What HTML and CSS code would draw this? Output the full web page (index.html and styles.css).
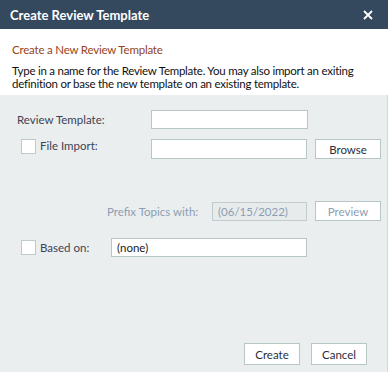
FILE: index.html
```html
<!DOCTYPE html>
<html>
<head>
<meta charset="utf-8">
<link rel="stylesheet" href="styles.css">
</head>
<body>
<div class="dialog">
  <div class="titlebar">
    <span class="title">Create Review Template</span>
    <svg class="close" width="10" height="10" viewBox="0 0 10 10"><path d="M1 1 L9 9 M9 1 L1 9" stroke="#ffffff" stroke-width="1.8" fill="none"/></svg>
  </div>
  <div class="header">
    <div class="heading">Create a New Review Template</div>
    <div class="desc">Type in a name for the Review Template. You may also import an exiting definition or base the new template on an existing template.</div>
  </div>
  <div class="body">
    <div class="row row1">
      <span class="label lbl-rt">Review Template:</span>
      <div class="input in-rt"></div>
    </div>
    <div class="row row2">
      <span class="check"></span>
      <span class="label lbl-fi">File Import:</span>
      <div class="input in-fi"></div>
      <div class="btn btn-side">Browse</div>
    </div>
    <div class="row row3">
      <span class="label lbl-pt">Prefix Topics with:</span>
      <div class="input disabled in-pt">(06/15/2022)</div>
      <div class="btn btn-side btn-dis">Preview</div>
    </div>
    <div class="row row4">
      <span class="check"></span>
      <span class="label lbl-bo">Based on:</span>
      <div class="input in-bo">(none)</div>
    </div>
    <div class="footer">
      <div class="btn btn-foot">Create</div>
      <div class="btn btn-foot">Cancel</div>
    </div>
  </div>
</div>
</body>
</html>
```
FILE: styles.css
```css
html, body {
  margin: 0;
  padding: 0;
}
body {
  font-family: Lato, "Noto Sans", sans-serif;
  font-size: 11.5px;
  color: #1c1c1c;
}
.dialog {
  width: 388px;
  height: 372px;
  display: flex;
  flex-direction: column;
  background: #eaeeee;
}
.titlebar {
  height: 29px;
  background: #34495e;
  color: #ffffff;
  display: flex;
  align-items: center;
  justify-content: space-between;
  padding: 0 15px 0 10px;
  flex: none;
}
.title {
  font-weight: bold;
  font-size: 13px;
}
.close {
  display: block;
  margin-top: 1px;
}
.header {
  background: #ffffff;
  padding: 14px 10px 5px 12px;
  flex: none;
}
.heading {
  color: #964418;
  line-height: 13px;
  margin-bottom: 8px;
  letter-spacing: -0.2px;
}
.desc {
  line-height: 13px;
  letter-spacing: -0.25px;
  color: #111111;
}
.body {
  flex: 1;
  display: flex;
  flex-direction: column;
  border-right: 1px solid #d3dada;
  padding-bottom: 7px;
}
.row {
  display: flex;
  align-items: center;
}
.label {
  color: #3e4256;
  white-space: nowrap;
}
.input {
  background: #ffffff;
  border: 1px solid #b9c6c6;
  box-sizing: border-box;
  padding: 0 5px;
  display: flex;
  align-items: center;
}
.check {
  width: 15px;
  height: 15px;
  box-sizing: border-box;
  background: #ffffff;
  border: 1px solid #bfcaca;
  margin-right: 4px;
  flex: none;
}
.btn {
  background: #ffffff;
  border: 1px solid #b9c6c6;
  box-sizing: border-box;
  display: flex;
  align-items: center;
  justify-content: center;
  color: #2a2e3e;
}
.row1 {
  margin-top: 15px;
  padding-left: 17px;
}
.lbl-rt { width: 134px; }
.in-rt { width: 157px; height: 19px; }
.row2 {
  margin-top: 10px;
  padding-left: 21px;
}
.lbl-fi { width: 111px; align-self: flex-start; }
.row2 .check { align-self: flex-start; }
.in-fi { width: 156px; height: 20px; }
.btn-side {
  width: 66px;
  height: 20px;
  margin-left: 8px;
}
.row3 {
  margin-top: 42px;
  padding-left: 107px;
}
.lbl-pt { width: 105px; color: #8d9db3; }
.in-pt { width: 95px; height: 19px; }
.disabled {
  background: #e8ebeb;
  border-color: #c2cbcb;
  color: #8d9db3;
}
.btn-dis { color: #8d9db3; }
.row4 {
  margin-top: 17px;
  padding-left: 21px;
}
.lbl-bo { width: 71px; }
.in-bo { width: 196px; height: 19px; }
.footer {
  margin-top: auto;
  display: flex;
  justify-content: flex-end;
  gap: 11px;
  padding-right: 20px;
}
.btn-foot {
  width: 56px;
  height: 22px;
}
```
